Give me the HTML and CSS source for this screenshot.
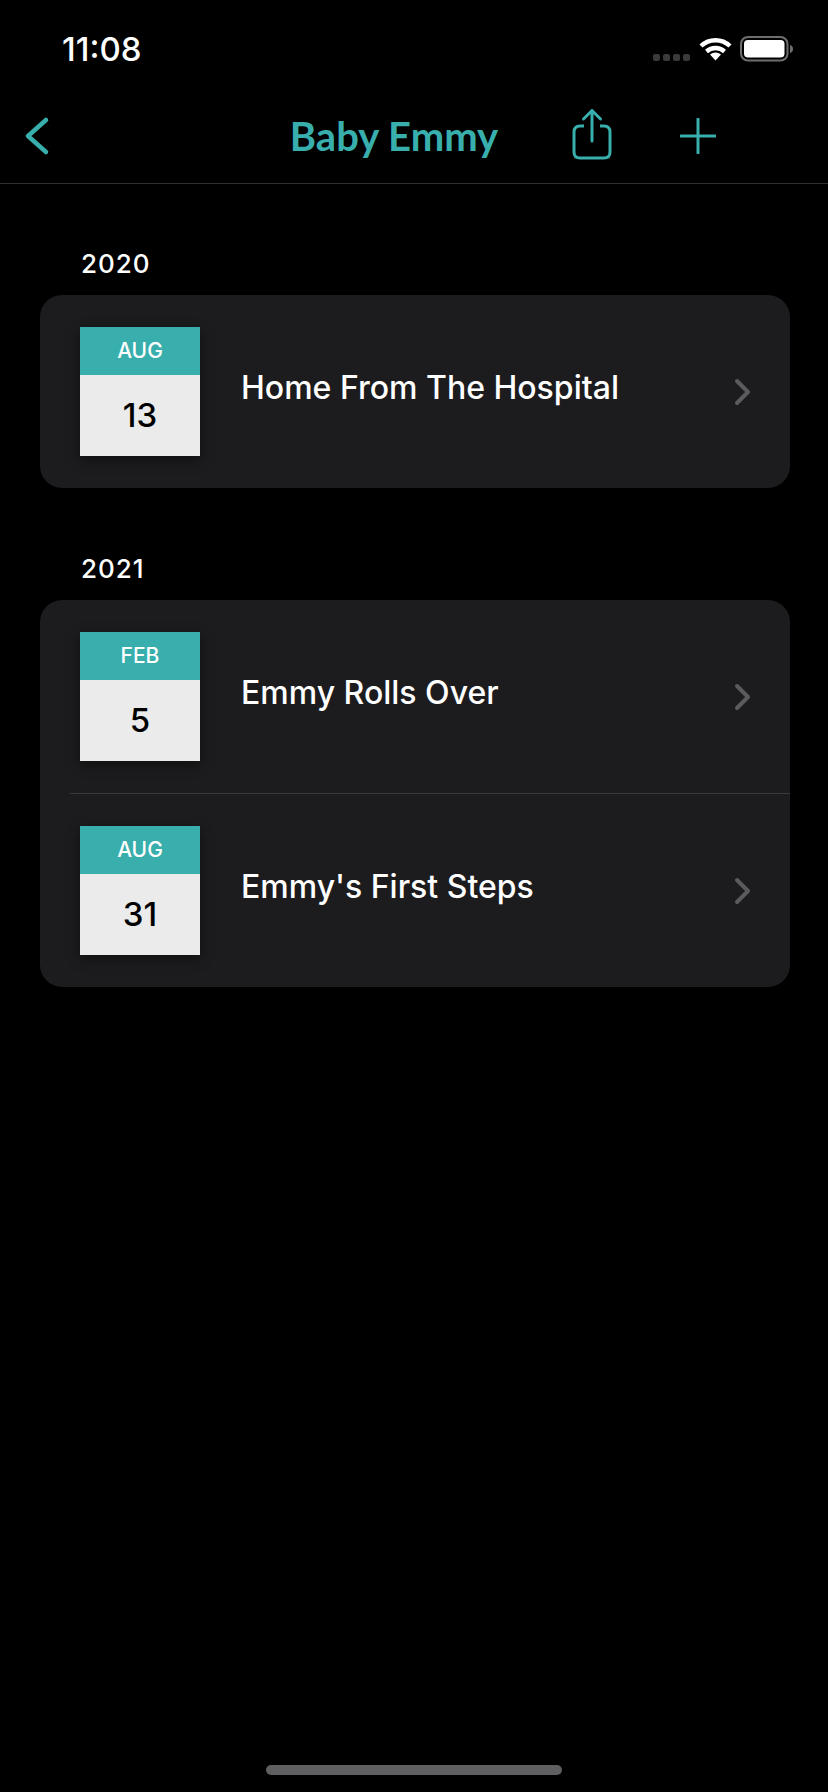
FILE: index.html
```html
<!DOCTYPE html>
<html lang="en">
<head>
    <meta charset="UTF-8">
    <meta name="viewport" content="width=device-width, initial-scale=1.0">
    <title>Baby Emmy</title>
    <link rel="stylesheet" href="styles.css">
</head>
<body>
    <div class="screen">
        <div class="statusbar">
            <span class="time">11:08</span>
            <div class="status-icons">
                <div class="signal"><i></i><i></i><i></i><i></i></div>
                <svg class="wifi" width="33" height="25" viewBox="0 0 33 25">
                    <path d="M2 10 A21 21 0 0 1 31 10" fill="none" stroke="#fff" stroke-width="4.4"/>
                    <path d="M7.5 15.5 A13.5 13.5 0 0 1 25.5 15.5" fill="none" stroke="#fff" stroke-width="4.4"/>
                    <path d="M11 18.6 A8 8 0 0 1 22 18.6 L16.5 24.5 Z" fill="#fff"/>
                </svg>
                <svg class="battery" width="54" height="26" viewBox="0 0 54 26">
                    <rect x="1" y="1" width="46.500" height="23.500" rx="7" fill="none" stroke="#6e6e70" stroke-width="2"/>
                    <rect x="4" y="4" width="40.500" height="17.500" rx="4" fill="#fff"/>
                    <path d="M50 9 C52 9.500 53 11 53 13 C53 15 52 16.500 50 17 Z" fill="#6e6e70"/>
                </svg>
            </div>
        </div>

        <div class="navbar">
            <svg class="back" width="26" height="40" viewBox="0 0 26 40">
                <path d="M22 4 L4 20 L22 36" fill="none" stroke="#38aead" stroke-width="4.500" stroke-linecap="round" stroke-linejoin="round"/>
            </svg>
            <h1 class="nav-title">Baby Emmy</h1>
            <svg class="share" width="40" height="52" viewBox="0 0 40 52">
                <path d="M12 18 H8 Q2 18 2 24 V44 Q2 50 8 50 H32 Q38 50 38 44 V24 Q38 18 32 18 H28" fill="none" stroke="#38aead" stroke-width="3"/>
                <path d="M20 33 V3 M11.500 11 L20 2.500 L28.500 11" fill="none" stroke="#38aead" stroke-width="3" stroke-linecap="round"/>
            </svg>
            <svg class="plus" width="36" height="36" viewBox="0 0 36 36">
                <path d="M18 1 V35 M1 18 H35" fill="none" stroke="#38aead" stroke-width="3" stroke-linecap="round"/>
            </svg>
        </div>

        <div class="content">
            <h2 class="year">2020</h2>
            <div class="card">
                <div class="row">
                    <div class="cal">
                        <div class="cal-month">AUG</div>
                        <div class="cal-day">13</div>
                    </div>
                    <span class="row-title">Home From The Hospital</span>
                    <svg class="chevron" width="18" height="28" viewBox="0 0 18 28">
                        <path d="M3 3 L14 14 L3 25" fill="none" stroke="#5b5b5f" stroke-width="4" stroke-linecap="round" stroke-linejoin="round"/>
                    </svg>
                </div>
            </div>

            <h2 class="year">2021</h2>
            <div class="card">
                <div class="row">
                    <div class="cal">
                        <div class="cal-month">FEB</div>
                        <div class="cal-day">5</div>
                    </div>
                    <span class="row-title">Emmy Rolls Over</span>
                    <svg class="chevron" width="18" height="28" viewBox="0 0 18 28">
                        <path d="M3 3 L14 14 L3 25" fill="none" stroke="#5b5b5f" stroke-width="4" stroke-linecap="round" stroke-linejoin="round"/>
                    </svg>
                </div>
                <div class="divider"></div>
                <div class="row">
                    <div class="cal">
                        <div class="cal-month">AUG</div>
                        <div class="cal-day">31</div>
                    </div>
                    <span class="row-title">Emmy's First Steps</span>
                    <svg class="chevron" width="18" height="28" viewBox="0 0 18 28">
                        <path d="M3 3 L14 14 L3 25" fill="none" stroke="#5b5b5f" stroke-width="4" stroke-linecap="round" stroke-linejoin="round"/>
                    </svg>
                </div>
            </div>
        </div>

        <div class="home-indicator"></div>
    </div>
</body>
</html>
```

FILE: styles.css
```css
html, body {
    margin: 0;
    background: #000;
}
.screen {
    display: flex;
    flex-direction: column;
    height: 1792px;
    overflow: hidden;
    font-family: Inter, "Liberation Sans", sans-serif;
    color: #fff;
    background: #000;
}
.statusbar {
    display: flex;
    align-items: flex-start;
    justify-content: space-between;
    height: 88px;
    box-sizing: border-box;
    padding: 29px 34px 0 62px;
}
.time {
    font-size: 33px;
    line-height: 40px;
    font-weight: 500;
}
.status-icons {
    display: flex;
    align-items: flex-start;
    padding-top: 7px;
}
.signal {
    display: flex;
    gap: 3px;
    margin-top: 18px;
    margin-right: 9px;
}
.signal i {
    width: 7px;
    height: 7px;
    border-radius: 2px;
    background: #3a3a3c;
}
.wifi { margin-right: 8px; }
.navbar {
    display: flex;
    align-items: center;
    height: 96px;
    box-sizing: border-box;
    padding: 0 44px 0 24px;
    border-bottom: 1px solid #2f2f31;
}
.back { margin-right: 232px; }
.nav-title {
    margin: 0;
    width: 224px;
    text-align: center;
    font-family: Lato, sans-serif;
    font-size: 40px;
    font-weight: 700;
    color: #38aead;
}
.share { margin-left: 66px; margin-top: -4px; }
.plus { margin-left: 68px; }
.content {
    flex: 1;
    padding: 64px 38px 0 40px;
}
.year {
    margin: 0 0 15px 41px;
    font-size: 26px;
    line-height: 32px;
    font-weight: 500;
    letter-spacing: 1px;
}
.card {
    margin-bottom: 65px;
    border-radius: 22px;
    background: #1c1c1e;
}
.row {
    display: flex;
    align-items: center;
    padding: 32px 38px 32px 40px;
}
.cal {
    width: 120px;
    flex: none;
    box-shadow: 0 4px 12px rgba(0,0,0,0.45);
}
.cal-month {
    height: 48px;
    line-height: 48px;
    text-align: center;
    font-size: 21px;
    font-weight: 500;
    background: #38aead;
}
.cal-day {
    height: 81px;
    line-height: 80px;
    text-align: center;
    font-size: 33px;
    font-weight: 500;
    color: #000;
    background: #ebebeb;
}
.row-title {
    flex: 1;
    margin-left: 41px;
    padding-bottom: 8px;
    font-size: 32px;
    font-weight: 500;
}
.divider {
    height: 1px;
    margin-left: 30px;
    background: #3a3a3c;
}
.home-indicator {
    width: 296px;
    height: 10px;
    margin: 0 auto 17px;
    border-radius: 5px;
    background: #5f5f61;
}
```
